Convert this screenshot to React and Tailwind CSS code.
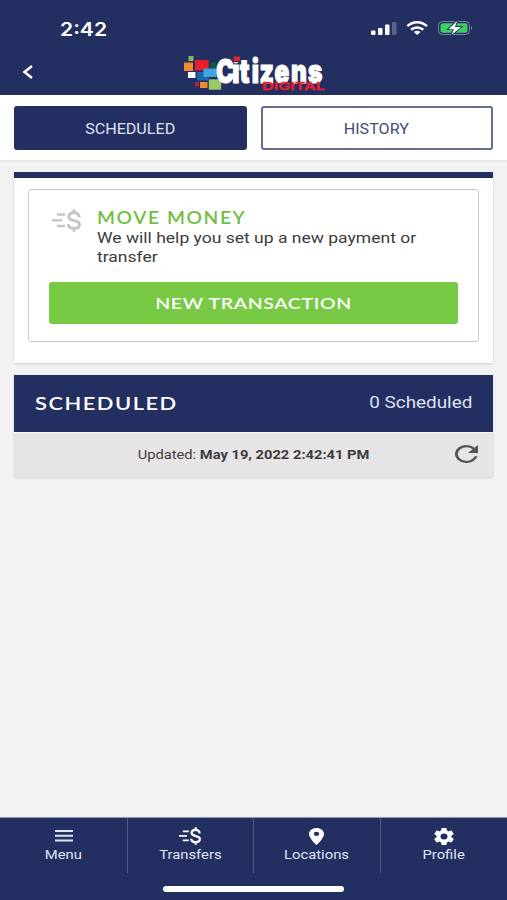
import React, { useState } from 'react'

// "$" with speed lines, shared by the card and the bottom menu
function TransferIcon({ className }) {
  return (
    <svg viewBox="0 0 29 23" preserveAspectRatio="none" fill="none" stroke="currentColor" className={className}>
      <path d="M5 5.500h8M0 11.300h10.500M5 17h8" strokeWidth="2.300" />
      <path d="M27.200 8.200C27.200 5.200 25 3.800 22 3.800s-5.300 1.500-5.300 3.900c0 5.400 10.800 2.400 10.800 7.700 0 2.400-2.200 3.900-5.500 3.900s-5.800-1.500-5.800-4.300M22 .3v3.600M22 19.200v3.600" strokeWidth="2.900" />
    </svg>
  )
}

function Logo() {
  return (
    <svg viewBox="0 0 144 38" className="h-[38px] w-[144px] overflow-visible">
      <rect x="5.500" y="3" width="5" height="5" fill="#8cb860" />
      <rect x="1" y="9.500" width="9" height="8.500" fill="#f08a2c" />
      <rect x="12" y="7" width="13.500" height="10.500" fill="#e8202c" />
      <rect x="27" y="9" width="6" height="6" fill="#14563c" />
      <rect x="5" y="19" width="7.500" height="6" fill="#fff" />
      <rect x="14" y="19" width="12" height="8.500" fill="#1769b0" />
      <rect x="20.500" y="15.500" width="13" height="8.500" fill="#3fa5e0" />
      <rect x="12" y="29" width="4" height="4.500" fill="#b81f3c" />
      <rect x="17" y="29" width="7.500" height="6" fill="#f08a2c" />
      <rect x="25.500" y="26" width="13" height="11" fill="#9ac864" stroke="#242f61" strokeWidth=".6" />
      <text
        x="44.500 66.500 76.600 93 103.400 123.600 146 169"
        y="29.500"
        transform="scale(.74 1)"
        fill="#fff"
        stroke="#fff"
        strokeWidth="1.200"
        fontFamily="Inter"
        fontWeight="900"
        fontSize="33"
      >
        Citizens
      </text>
      <rect x="49.500" y="2" width="8" height="7.200" fill="#242f61" />
      <rect x="50.500" y="3.500" width="6.500" height="4.500" fill="#e8202c" />
      <text x="79" y="37" textLength="63" lengthAdjust="spacingAndGlyphs" fill="#ec1f2c" stroke="#ec1f2c" strokeWidth=".3" fontFamily="Inter" fontWeight="600" fontSize="11">DIGITAL</text>
    </svg>
  )
}

function StatusIcons() {
  return (
    <svg viewBox="0 0 102 18" className="h-[18px] w-[102px]">
      <g fill="#fff">
        <rect x="1" y="11.500" width="4.500" height="4.500" rx="1" />
        <rect x="8" y="9" width="4.500" height="7" rx="1" />
        <rect x="15" y="5.500" width="4.500" height="10.500" rx="1" />
        <rect x="22" y="3" width="4.500" height="13" rx="1" opacity=".25" />
      </g>
      <g fill="none" stroke="#fff" strokeWidth="2.500">
        <path d="M37.300 7.200C43 1.900 51.200 1.900 57 7.200" />
        <path d="M41 10.800c3.500-3 8.800-3 12.300 0" />
      </g>
      <path d="M43.800 13c2-1.700 4.700-1.700 6.700 0l-3.300 2.900z" fill="#fff" />
      <rect x="68.500" y="2.500" width="31" height="13" rx="4" fill="none" stroke="#7c84a3" />
      <rect x="70.500" y="4.300" width="27" height="9.400" rx="2.500" fill="#3ecf62" />
      <path d="M101 7v4c1.300-.4 1.300-3.600 0-4z" fill="#7c84a3" />
      <path d="M87 2L78.500 10.200h5.500l-2.500 5.800L91 8h-6z" fill="#fff" stroke="#242f61" strokeWidth="1.800" paintOrder="stroke" />
    </svg>
  )
}

const menu = [
  {
    label: 'Menu',
    icon: (
      <svg viewBox="0 0 20 18" className="h-[18px] w-5 fill-[#dfe3f3]">
        <path d="M1 3h18v2H1zM1 7.800h18v2H1zM1 12.500h18v2H1z" />
      </svg>
    ),
  },
  { label: 'Transfers', icon: <TransferIcon className="h-[18px] w-[22px] text-white" /> },
  {
    label: 'Locations',
    icon: (
      <svg viewBox="5 2 14 20" preserveAspectRatio="none" className="h-[17px] w-[15px] fill-white">
        <path d="M12 2C8.130 2 5 5.130 5 9c0 5.250 7 13 7 13s7-7.750 7-13c0-3.870-3.130-7-7-7zm0 9.500a2.500 2.500 0 010-5 2.500 2.500 0 010 5z" />
      </svg>
    ),
  },
  {
    label: 'Profile',
    icon: (
      <svg viewBox="2 2 20 20" preserveAspectRatio="none" className="h-[17px] w-5 fill-white">
        <path d="M19.430 12.980c.04-.32.07-.64.07-.98s-.03-.66-.07-.98l2.110-1.650c.19-.15.24-.42.12-.64l-2-3.460c-.12-.22-.39-.3-.61-.22l-2.490 1c-.52-.4-1.080-.73-1.690-.98l-.38-2.650C14.460 2.180 14.250 2 14 2h-4c-.25 0-.46.18-.49.42l-.38 2.650c-.61.25-1.170.59-1.690.98l-2.490-1c-.23-.09-.49 0-.61.22l-2 3.460c-.13.22-.07.49.12.64l2.110 1.650c-.04.32-.07.65-.07.98s.03.66.07.98l-2.110 1.650c-.19.15-.24.42-.12.64l2 3.460c.12.22.39.3.61.22l2.490-1c.52.4 1.080.73 1.690.98l.38 2.650c.03.24.24.42.49.42h4c.25 0 .46-.18.49-.42l.38-2.650c.61-.25 1.170-.59 1.690-.98l2.490 1c.23.09.49 0 .61-.22l2-3.460c.12-.22.07-.49-.12-.64l-2.110-1.650zM12 15.500a3.500 3.500 0 110-7 3.500 3.500 0 010 7z" />
      </svg>
    ),
  },
]

export default function App() {
  const [tab, setTab] = useState('scheduled')

  return (
    <div className="flex h-[900px] w-[507px] flex-col overflow-hidden bg-[#f2f2f2] font-[Roboto,sans-serif] text-[#3c3c3c]">
      {/* Header */}
      <header className="h-[95px] shrink-0 bg-[#242f61] text-white">
        <div className="flex h-[53px] items-start justify-between pt-[18.500px] pr-[35px] pl-[60px]">
          <span className="origin-left scale-x-[1.14] font-[Inter,sans-serif] text-[18.500px] leading-5 font-semibold">2:42</span>
          <StatusIcons />
        </div>
        <div className="grid grid-cols-[183px_144px_1fr] items-start">
          <button className="pt-3 pl-[22px]" aria-label="Back">
            <svg viewBox="0 0 12 14" className="h-[14px] w-3" fill="none" stroke="#fff" strokeWidth="2.500">
              <path d="M10 1L2.500 7l7.500 6" />
            </svg>
          </button>
          <Logo />
        </div>
      </header>

      {/* Tabs */}
      <div className="flex h-[67px] shrink-0 gap-[14px] border-b-2 border-[#e6e6e6] bg-white px-[14px] pt-[11px]">
        {['scheduled', 'history'].map((id) => (
          <button
            key={id}
            onClick={() => setTab(id)}
            className={`h-11 w-[233px] rounded-[3px] border-2 pt-[2px] text-[14px] uppercase ${
              tab === id ? 'border-[#242f61] bg-[#242f61] text-[#dfe3f3]' : 'border-[#666d8f] bg-white text-[#454c78]'
            }`}
          >
            <span className="inline-block scale-x-[1.15]">{id}</span>
          </button>
        ))}
      </div>

      <main className="flex flex-1 flex-col gap-3 px-[14px] pt-[10px]">
        {/* Move money */}
        <section className="h-[191px] border-t-[6px] border-[#242f61] bg-white px-[14px] pt-[11px] shadow-[0_1px_2px_rgba(0,0,0,0.15)]">
          <div className="h-[153px] rounded-[3px] border-[1.500px] border-[#cacaca] px-[20px] pt-[18px]">
            <div className="flex h-[74px] gap-4 pl-[3px]">
              <TransferIcon className="mt-[1px] h-[23px] w-[29px] shrink-0 text-[#c4c4c4]" />
              <div className="w-[285px] origin-left scale-x-[1.13]">
                <h2 className="font-[Lato,sans-serif] text-[17px] leading-[20px] font-semibold tracking-[1.400px] text-[#6fbf44]">MOVE MONEY</h2>
                <p className="pt-px text-[15.500px] leading-[18.500px]">We will help you set up a new payment or transfer</p>
              </div>
            </div>
            <button className="h-[42px] w-full rounded-[3px] bg-[#78c943] font-[Lato,sans-serif] text-[16px] font-semibold text-white">
              <span className="inline-block scale-x-[1.22] tracking-[.5px]">NEW TRANSACTION</span>
            </button>
          </div>
        </section>

        {/* Scheduled list */}
        <section className="shadow-[0_1px_2px_rgba(0,0,0,0.15)]">
          <div className="flex h-[57px] items-center justify-between bg-[#242f61] px-[21px] text-white">
            <h2 className="mt-px origin-left scale-x-[1.25] font-[Lato,sans-serif] text-[17.500px] font-semibold tracking-[1.200px]">SCHEDULED</h2>
            <span className="mb-[2px] origin-right scale-x-[1.18] text-[16px] text-[#dfe3f3]">0 Scheduled</span>
          </div>
          <div className="grid h-[45px] grid-cols-[1fr_auto_1fr] items-center border-t border-[#f6f4f4] bg-[#e6e4e4]">
            <p className="col-start-2 scale-x-[1.130] text-[13px]">
              Updated: <b>May 19, 2022 2:42:41 PM</b>
            </p>
            <svg viewBox="4 4 16 16" preserveAspectRatio="none" className="mr-[15px] mb-[3px] h-[18px] w-[23px] justify-self-end fill-[#555]">
              <path d="M17.650 6.350A7.958 7.958 0 0012 4a8 8 0 107.730 10h-2.080A6 6 0 1112 6c1.660 0 3.140.69 4.220 1.780L13 11h7V4l-2.350 2.350z" />
            </svg>
          </div>
        </section>
      </main>

      {/* Bottom menu */}
      <nav className="h-[83px] shrink-0 border-t border-[#8f95ad] bg-[#242f61]">
        <div className="grid h-[55px] grid-cols-4 divide-x divide-[#505a86] pl-px">
          {menu.map(({ label, icon }) => (
            <button key={label} className="flex flex-col items-center pt-[9px]">
              <span className="flex h-[18px] items-center">{icon}</span>
              <span className="scale-x-[1.140] text-[13px] leading-[20px] text-[#dfe3f3]">{label}</span>
            </button>
          ))}
        </div>
        <div className="mx-auto mt-[13px] h-[6px] w-[181px] rounded-full bg-white" />
      </nav>
    </div>
  )
}
